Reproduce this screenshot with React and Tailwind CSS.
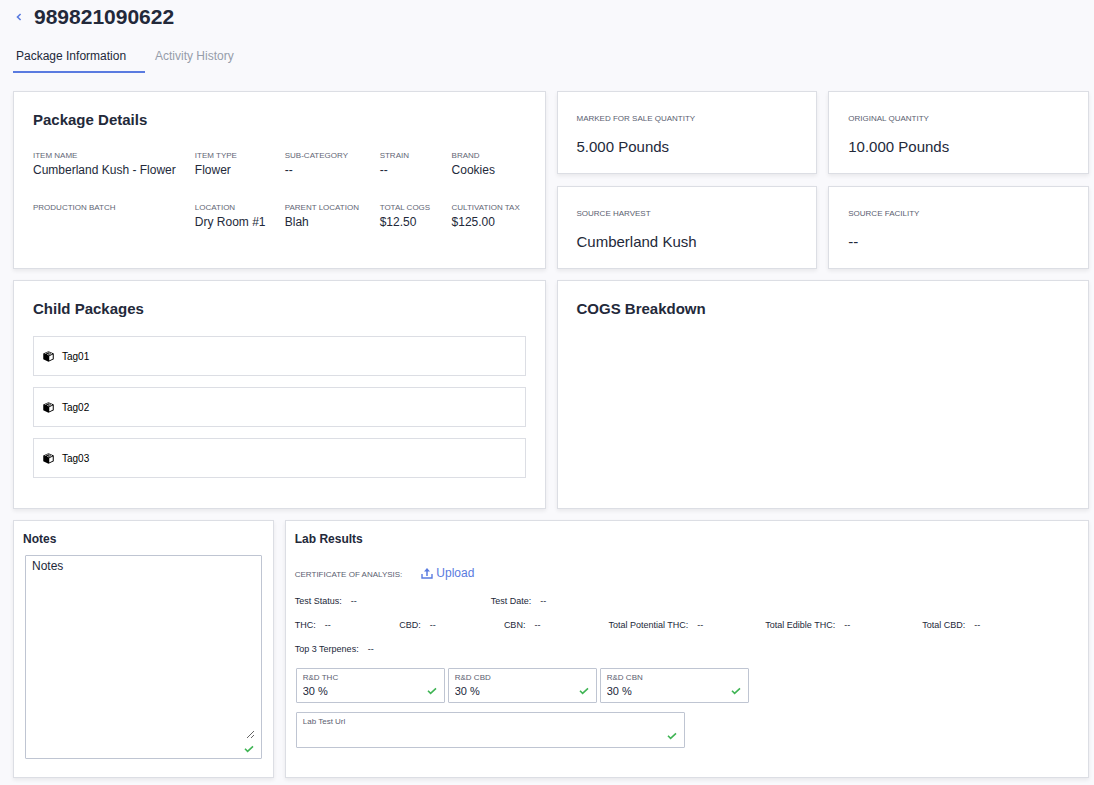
const details = [
  { label: "Item Name", value: "Cumberland Kush - Flower" },
  { label: "Item Type", value: "Flower" },
  { label: "Sub-Category", value: "--" },
  { label: "Strain", value: "--" },
  { label: "Brand", value: "Cookies" },
  { label: "Production Batch", value: "" },
  { label: "Location", value: "Dry Room #1" },
  { label: "Parent Location", value: "Blah" },
  { label: "Total COGS", value: "$12.50" },
  { label: "Cultivation Tax", value: "$125.00" },
];

const stats = [
  { label: "Marked for sale quantity", value: "5.000 Pounds" },
  { label: "Original quantity", value: "10.000 Pounds" },
  { label: "Source harvest", value: "Cumberland Kush" },
  { label: "Source facility", value: "--" },
];

const childPackages = ["Tag01", "Tag02", "Tag03"];

const cannabinoids = [
  "THC:",
  "CBD:",
  "CBN:",
  "Total Potential THC:",
  "Total Edible THC:",
  "Total CBD:",
];

const rdFields = [
  { id: "rd-thc", label: "R&D THC" },
  { id: "rd-cbd", label: "R&D CBD" },
  { id: "rd-cbn", label: "R&D CBN" },
];

const Card = ({ className = "", children }) => (
  <section
    className={`border border-[#dcdee4] bg-white shadow-[0_2px_4px_rgba(0,0,0,0.07)] ${className}`}
  >
    {children}
  </section>
);

const CheckIcon = ({ className = "" }) => (
  <svg viewBox="0 0 10 8" className={`h-2 w-[10px] ${className}`} fill="none">
    <path d="M1 3.8 L3.6 6.4 L9 1.4" stroke="#3fb454" strokeWidth="1.6" />
  </svg>
);

const UploadIcon = () => (
  <svg viewBox="0 0 12 12" className="h-3 w-3" fill="none">
    <path d="M1 7 V11 H11 V7" stroke="currentColor" strokeWidth="1.4" />
    <path d="M6 9 V4" stroke="currentColor" strokeWidth="1.5" />
    <path d="M6 1 L9 4.6 H3 Z" fill="currentColor" />
  </svg>
);

const BoxIcon = () => (
  <svg viewBox="0 0 22 22" className="h-[11px] w-[11px]" fill="none">
    <path d="M11 0.5 L21.5 5 V16.5 L11 21.5 L0.5 16.5 V5 Z" fill="black" />
    {/* open right face */}
    <path d="M12.5 10.5 L19.5 7.2 V15.4 L12.5 18.8 Z" fill="white" />
    {/* tape over the lid */}
    <path d="M3.5 5.6 L11 2.4 L13.5 3.4" stroke="white" strokeWidth="1.2" />
    <path d="M8 7.4 L15.5 4.2 L18 5.4 L11 8.4" stroke="white" strokeWidth="1.2" />
  </svg>
);

const LabValue = ({ label }) => (
  <p className="flex gap-[9px] text-[9px] leading-3">
    <span>{label}</span>
    <span>--</span>
  </p>
);

const Field = ({ id, label, value, className = "" }) => (
  <div
    className={`relative rounded-[1px] border border-[#bfc5d2] px-[6px] pt-1 ${className}`}
  >
    <label htmlFor={id} className="block text-[8px] leading-[9px] text-[#5a6070]">
      {label}
    </label>
    <input
      id={id}
      defaultValue={value}
      className="mt-[1px] block h-4 w-full pr-5 text-[11px] leading-4 outline-none"
    />
    <CheckIcon className="absolute right-[7px] bottom-[7px]" />
  </div>
);

const App = () => {
  return (
    <div className="min-h-screen bg-[#f9f9fc] pr-[5px] pb-2 pl-[13px] font-['Liberation_Sans',Arial,sans-serif] text-[#23293a]">
      <header className="flex h-[34px] items-center">
        <button aria-label="Back" className="mr-3 ml-[3px] text-[#5a7be0]">
          <svg viewBox="0 0 6 8" className="h-2 w-[6px]" fill="none">
            <path d="M4.6 1 L1.5 4 L4.6 7" stroke="currentColor" strokeWidth="1.6" />
          </svg>
        </button>
        <h1 className="text-[21px] leading-6 font-bold">989821090622</h1>
      </header>

      <nav className="mt-2 mb-[18px] flex text-[12px] leading-4">
        <button className="h-[31px] w-[132px] border-b-2 border-[#5a7be0] pb-[2px] pl-[3px] text-left">
          Package Information
        </button>
        <button className="ml-[7px] h-[31px] border-b-2 border-transparent px-[3px] pb-[2px] text-[#969daa]">
          Activity History
        </button>
      </nav>

      <main className="grid grid-cols-4 gap-[11px]">
        <Card className="col-span-2 min-h-[178px] px-[19px] py-[18px]">
          <h2 className="text-[15px] leading-5 font-bold">Package Details</h2>
          <dl className="mt-5 grid grid-cols-[162fr_90fr_95fr_72fr_74fr] gap-y-5">
            {details.map((item) => (
              <div key={item.label} className="min-h-8 whitespace-nowrap">
                <dt className="text-[8px] leading-3 text-[#5f6675] uppercase">
                  {item.label}
                </dt>
                <dd className="text-[12px] leading-4">{item.value}</dd>
              </div>
            ))}
          </dl>
        </Card>

        <div className="col-span-2 grid grid-cols-2 gap-x-[11px] gap-y-3">
          {stats.map((stat) => (
            <Card key={stat.label} className="px-[19px] pt-[19px]">
              <h3 className="text-[8px] leading-4 text-[#5a6070] uppercase">
                {stat.label}
              </h3>
              <p className="mt-[10px] text-[15px] leading-5">{stat.value}</p>
            </Card>
          ))}
        </div>

        <Card className="col-span-2 min-h-[229px] px-[19px] pt-[18px]">
          <h2 className="text-[15px] leading-5 font-bold">Child Packages</h2>
          <ul className="mt-[17px] flex flex-col gap-[11px]">
            {childPackages.map((tag) => (
              <li
                key={tag}
                className="flex h-10 items-center gap-2 border border-[#dcdee4] px-[9px] text-[10px] text-black"
              >
                <BoxIcon />
                {tag}
              </li>
            ))}
          </ul>
        </Card>

        <Card className="col-span-2 px-[19px] pt-[18px]">
          <h2 className="text-[15px] leading-5 font-bold">COGS Breakdown</h2>
        </Card>

        <Card className="min-h-[258px] px-[9px] pt-[10px]">
          <h2 className="text-[12px] leading-4 font-bold">
            <label htmlFor="notes">Notes</label>
          </h2>
          <div className="mx-[2px] mt-2 h-[204px] rounded-[1px] border border-[#bfc5d2] pt-[2px] pr-[6px] pl-[6px]">
            <textarea
              id="notes"
              defaultValue="Notes"
              className="block h-[181px] w-full resize text-[12px] leading-4 outline-none"
            />
            <CheckIcon className="mt-[6px] mr-[1px] ml-auto" />
          </div>
        </Card>

        <Card className="col-span-3 px-[9px] pt-[10px]">
          <h2 className="text-[12px] leading-4 font-bold">Lab Results</h2>
          <div className="mt-[18px] flex h-4 items-center">
            <h3 className="pt-1 text-[8px] leading-3 text-[#5a6070] uppercase">
              Certificate of Analysis:
            </h3>
            <button className="ml-[19px] flex items-center gap-[3px] text-[12px] leading-4 text-[#5a7be0]">
              <UploadIcon />
              Upload
            </button>
          </div>
          <div className="mt-[14px] flex flex-col gap-3">
            <div className="grid grid-cols-4">
              <LabValue label="Test Status:" />
              <LabValue label="Test Date:" />
            </div>
            <div className="grid grid-cols-[2fr_2fr_2fr_3fr_3fr_3fr]">
              {cannabinoids.map((label) => (
                <LabValue key={label} label={label} />
              ))}
            </div>
            <LabValue label="Top 3 Terpenes:" />
          </div>
          <form className="mt-[13px] ml-[1px]">
            <div className="flex gap-[3px]">
              {rdFields.map((field) => (
                <Field key={field.id} {...field} value="30 %" className="h-[35px] w-[149px]" />
              ))}
            </div>
            <Field
              id="lab-test-url"
              label="Lab Test Url"
              value=""
              className="mt-[9px] h-9 w-[389px]"
            />
          </form>
        </Card>
      </main>
    </div>
  );
};

export default App;
